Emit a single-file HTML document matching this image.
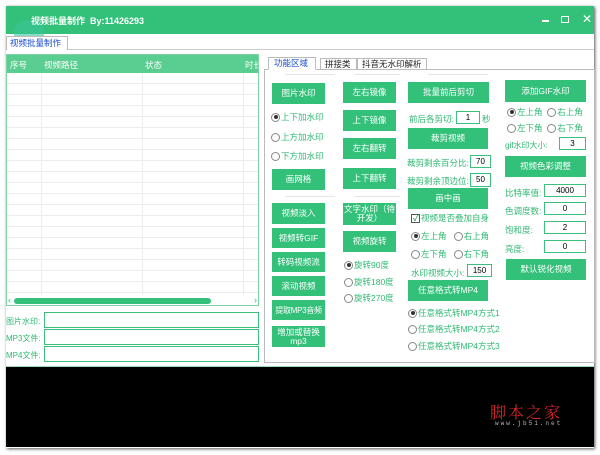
<!DOCTYPE html><html><head><meta charset="utf-8"><style>
*{margin:0;padding:0;box-sizing:border-box}
body{width:600px;height:455px;background:#fff;position:relative;overflow:hidden;font-family:"Liberation Sans","Noto Sans CJK SC",sans-serif;font-size:8.5px;color:#2fb872}
.a{position:absolute;white-space:nowrap}
.b{position:absolute;background:#33c17a;color:#fff;display:flex;align-items:center;justify-content:center;text-align:center;font-size:8.5px;line-height:9px}
.r{position:absolute;white-space:nowrap;font-size:8.5px;display:flex;align-items:center}
.r i{display:inline-block;width:9px;height:9px;border:1px solid #888;border-radius:50%;margin-right:1px;position:relative;background:#fff}
.r i.on:after{content:"";position:absolute;left:1.5px;top:1.5px;width:4px;height:4px;border-radius:50%;background:#333}
.in{position:absolute;border:1px solid #3cbf7c;background:#fff;color:#000;text-align:center;font-size:8px;line-height:11px}
.sep{position:absolute;height:1px;background:#e6e6e6}
.t{font-size:8.5px}
</style></head><body>
<div class="a" style="left:6px;top:6px;width:588px;height:442px;background:#fff;box-shadow:1px 1px 3px #555"></div>
<div class="a" style="left:6px;top:6px;width:588px;height:28px;background:#33c17a"></div>
<div class="a" style="left:14px;top:20px;width:30px;height:20px;border-radius:50% 50% 0 0;background:#3cc59a;opacity:.6"></div>
<div class="a" style="left:31px;top:14px;color:#fff;font-size:9px;font-weight:bold">视频批量制作&nbsp;&nbsp;By:11426293</div>
<div class="a" style="left:542px;top:20px;width:7px;height:2px;background:#fff"></div>
<div class="a" style="left:561px;top:16px;width:8px;height:7px;border:1.5px solid #fff"></div>
<div class="a" style="left:582px;top:12px;color:#fff;font-size:12px">✕</div>
<div class="a" style="left:6px;top:49px;width:588px;height:1px;background:#ccc"></div>
<div class="a" style="left:6px;top:36px;width:62px;height:14px;border:1px solid #bbb;border-bottom:none;background:#fff;color:#1a4fd0;font-size:8.5px;padding-left:3px;line-height:12px">视频批量制作</div>
<div class="a" style="left:6px;top:54px;width:253px;height:252px;border:1px solid #7dd4a3;background:#fff;overflow:hidden">
<div class="a" style="left:0;top:0;width:253px;height:18px;background:#5acd91"></div>
<div class="a t" style="left:3px;top:4px;color:#fff">序号</div>
<div class="a t" style="left:37px;top:4px;color:#fff">视频路径</div>
<div class="a t" style="left:138px;top:4px;color:#fff">状态</div>
<div class="a t" style="left:238px;top:4px;color:#fff">时长</div>
<div class="a" style="left:0;top:18px;width:253px;height:225px;background:repeating-linear-gradient(#fff 0,#fff 10px,#ececec 10px,#ececec 11px)"></div>
<div class="a" style="left:34px;top:18px;width:1px;height:225px;background:#ececec"></div>
<div class="a" style="left:135px;top:18px;width:1px;height:225px;background:#ececec"></div>
<div class="a" style="left:236px;top:18px;width:1px;height:225px;background:#ececec"></div>
<div class="a" style="left:0;top:240px;width:253px;height:12px;background:#fff"></div>
<div class="a" style="left:7px;top:243px;width:197px;height:6px;border-radius:3px;background:#33c17a"></div>
<div class="a" style="left:1px;top:240px;font-size:9px;color:#33c17a">‹</div>
<div class="a" style="left:247px;top:240px;font-size:9px;color:#33c17a">›</div>
</div>
<div class="a" style="left:6px;top:316px;font-size:8px">图片水印:</div>
<div class="a" style="left:6px;top:333px;font-size:8px">MP3文件:</div>
<div class="a" style="left:6px;top:350px;font-size:8px">MP4文件:</div>
<div class="in" style="left:44px;top:312px;width:215px;height:16px"></div>
<div class="in" style="left:44px;top:329px;width:215px;height:16px"></div>
<div class="in" style="left:44px;top:346px;width:215px;height:16px"></div>
<div class="a" style="left:264px;top:69px;width:331px;height:294px;border:1px solid #bbb;background:#fff"></div>
<div class="a" style="left:268px;top:57px;width:48px;height:13px;border:1px solid #bbb;border-bottom:1px solid #fff;background:#fff;color:#1a4fd0;font-size:8.5px;line-height:11px;padding-left:5px">功能区域</div>
<div class="a" style="left:320px;top:58px;width:37px;height:12px;border:1px solid #bbb;background:#fff;color:#222;font-size:8.5px;line-height:10px;padding-left:4px">拼接类</div>
<div class="a" style="left:357px;top:58px;width:70px;height:12px;border:1px solid #bbb;background:#fff;color:#222;font-size:8.5px;line-height:10px;padding-left:4px">抖音无水印解析</div>
<div class="sep" style="left:285px;top:74px;width:50px"></div>
<div class="sep" style="left:355px;top:74px;width:45px"></div>
<div class="sep" style="left:428px;top:74px;width:60px"></div>
<div class="sep" style="left:285px;top:196px;width:50px"></div>
<div class="sep" style="left:355px;top:196px;width:45px"></div>
<div class="b" style="left:272px;top:83px;width:53px;height:21px">图片水印</div>
<div class="r" style="left:271px;top:111px"><i class="on"></i>上下加水印</div>
<div class="r" style="left:271px;top:131px"><i></i>上方加水印</div>
<div class="r" style="left:271px;top:150px"><i></i>下方加水印</div>
<div class="b" style="left:272px;top:169px;width:53px;height:21px">画网格</div>
<div class="b" style="left:272px;top:203px;width:53px;height:21px">视频淡入</div>
<div class="b" style="left:272px;top:228px;width:53px;height:20px">视频转GIF</div>
<div class="b" style="left:272px;top:252px;width:53px;height:20px">转码视频流</div>
<div class="b" style="left:272px;top:276px;width:53px;height:20px">滚动视频</div>
<div class="b" style="left:272px;top:300px;width:53px;height:20px;font-size:8px;letter-spacing:-.3px">提取MP3音频</div>
<div class="b" style="left:272px;top:326px;width:53px;height:21px">增加或替换<br>mp3</div>
<div class="b" style="left:343px;top:82px;width:53px;height:21px">左右镜像</div>
<div class="b" style="left:343px;top:110px;width:53px;height:21px">上下镜像</div>
<div class="b" style="left:343px;top:138px;width:53px;height:21px">左右翻转</div>
<div class="b" style="left:343px;top:168px;width:53px;height:21px">上下翻转</div>
<div class="b" style="left:343px;top:203px;width:53px;height:22px">文字水印（待<br>开发）</div>
<div class="b" style="left:343px;top:231px;width:53px;height:21px">视频旋转</div>
<div class="r" style="left:344px;top:259px"><i class="on"></i>旋转90度</div>
<div class="r" style="left:344px;top:276px"><i></i>旋转180度</div>
<div class="r" style="left:344px;top:292px"><i></i>旋转270度</div>
<div class="b" style="left:408px;top:82px;width:81px;height:21px">批量前后剪切</div>
<div class="a t" style="left:409px;top:113px">前后各剪切:</div>
<div class="in" style="left:456px;top:111px;width:24px;height:13px">1</div>
<div class="a t" style="left:482px;top:113px">秒</div>
<div class="b" style="left:408px;top:128px;width:80px;height:21px">裁剪视频</div>
<div class="a t" style="left:407px;top:157px">裁剪剩余百分比:</div>
<div class="in" style="left:470px;top:155px;width:21px;height:13px">70</div>
<div class="a t" style="left:407px;top:175px">裁剪剩余顶边位:</div>
<div class="in" style="left:470px;top:173px;width:21px;height:14px">50</div>
<div class="b" style="left:408px;top:188px;width:80px;height:21px">画中画</div>
<div class="r" style="left:411px;top:212px"><i style="border-radius:0;border-color:#555"></i>视频是否叠加自身</div>
<div class="a" style="left:413px;top:211px;color:#1a8f3f;font-size:9px">✓</div>
<div class="r" style="left:411px;top:230px"><i class="on"></i>左上角&nbsp;&nbsp;&nbsp;<i></i>右上角</div>
<div class="r" style="left:411px;top:248px"><i></i>左下角&nbsp;&nbsp;&nbsp;<i></i>右下角</div>
<div class="a t" style="left:411px;top:267px">水印视频大小:</div>
<div class="in" style="left:467px;top:264px;width:25px;height:13px">150</div>
<div class="b" style="left:408px;top:280px;width:80px;height:21px">任意格式转MP4</div>
<div class="r" style="left:408px;top:307px"><i class="on"></i>任意格式转MP4方式1</div>
<div class="r" style="left:408px;top:323px"><i></i>任意格式转MP4方式2</div>
<div class="r" style="left:408px;top:340px"><i></i>任意格式转MP4方式3</div>
<div class="b" style="left:505px;top:80px;width:81px;height:22px">添加GIF水印</div>
<div class="r" style="left:507px;top:106px"><i class="on"></i>左上角&nbsp;&nbsp;<i></i>右上角</div>
<div class="r" style="left:507px;top:122px"><i></i>左下角&nbsp;&nbsp;<i></i>右下角</div>
<div class="a" style="left:505px;top:140px;font-size:8px">gif水印大小:</div>
<div class="in" style="left:559px;top:137px;width:27px;height:13px">3</div>
<div class="b" style="left:505px;top:156px;width:81px;height:21px">视频色彩调整</div>
<div class="a t" style="left:505px;top:187px">比特率值:</div>
<div class="in" style="left:544px;top:184px;width:42px;height:13px">4000</div>
<div class="a t" style="left:505px;top:205px">色调度数:</div>
<div class="in" style="left:544px;top:202px;width:42px;height:13px">0</div>
<div class="a t" style="left:505px;top:224px">饱和度:</div>
<div class="in" style="left:544px;top:221px;width:42px;height:13px">2</div>
<div class="a t" style="left:505px;top:243px">亮度:</div>
<div class="in" style="left:544px;top:240px;width:42px;height:13px">0</div>
<div class="b" style="left:506px;top:259px;width:80px;height:21px">默认锐化视频</div>
<div class="a" style="left:6px;top:366px;width:588px;height:1px;background:#9ad8b6"></div>
<div class="a" style="left:6px;top:367px;width:588px;height:80px;background:#000"></div>
<div class="a" style="left:490px;top:400px;color:#d4262a;font-size:16px;font-family:'Noto Serif CJK SC',serif;letter-spacing:2px">脚本之家</div>
<div class="a" style="left:495px;top:420px;color:#bbb;font-size:6px;letter-spacing:2px;font-family:'Liberation Mono',monospace">www.jb51.net</div>
</body></html>
